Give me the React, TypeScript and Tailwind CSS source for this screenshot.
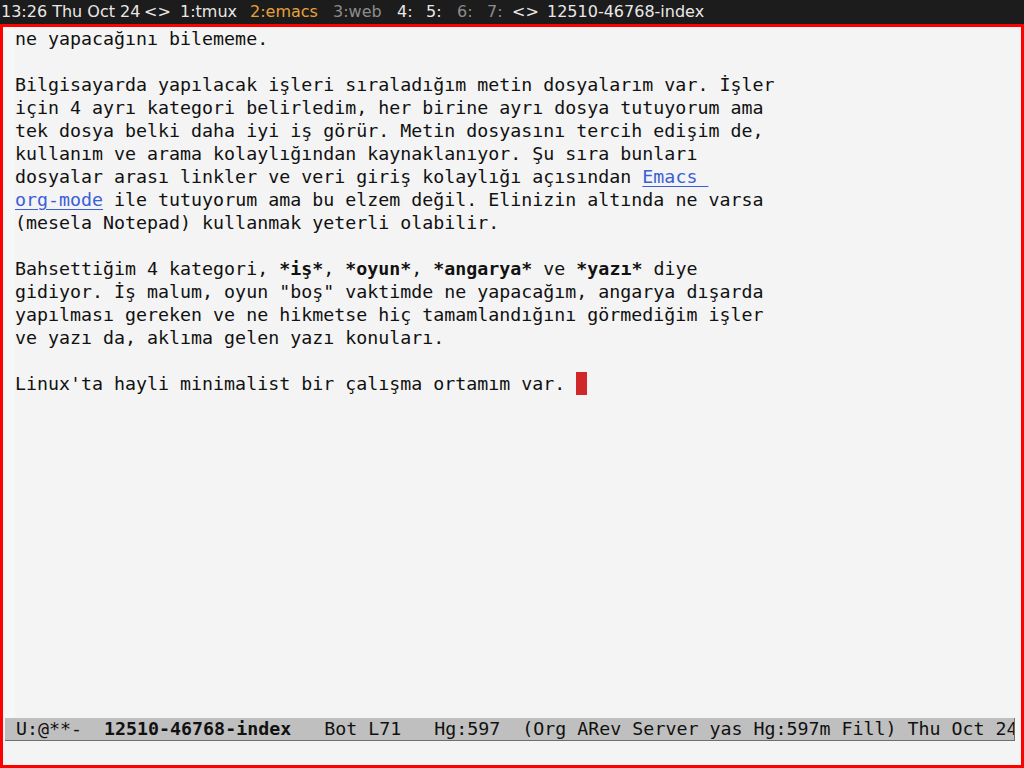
import React from "react";

const mono = { fontFamily: '"DejaVu Sans Mono", "Liberation Mono", monospace' };

function B({ children }: { children: React.ReactNode }) {
  return <span className="font-bold">{children}</span>;
}

function L({ children }: { children: React.ReactNode }) {
  return <span className="text-[#3a60d8] underline underline-offset-[3px]">{children}</span>;
}

export default function App() {
  const lines: React.ReactNode[] = [
    "ne yapacağını bilememe.",
    "",
    "Bilgisayarda yapılacak işleri sıraladığım metin dosyalarım var. İşler",
    "için 4 ayrı kategori belirledim, her birine ayrı dosya tutuyorum ama",
    "tek dosya belki daha iyi iş görür. Metin dosyasını tercih edişim de,",
    "kullanım ve arama kolaylığından kaynaklanıyor. Şu sıra bunları",
    <>dosyalar arası linkler ve veri giriş kolaylığı açısından <L>Emacs </L></>,
    <><L>org-mode</L> ile tutuyorum ama bu elzem değil. Elinizin altında ne varsa</>,
    "(mesela Notepad) kullanmak yeterli olabilir.",
    "",
    <>Bahsettiğim 4 kategori, <B>*iş*</B>, <B>*oyun*</B>, <B>*angarya*</B> ve <B>*yazı*</B> diye</>,
    'gidiyor. İş malum, oyun "boş" vaktimde ne yapacağım, angarya dışarda',
    "yapılması gereken ve ne hikmetse hiç tamamlandığını görmediğim işler",
    "ve yazı da, aklıma gelen yazı konuları.",
    "",
    <>Linux'ta hayli minimalist bir çalışma ortamım var. <span className="inline-block w-[11px] h-[23px] align-top bg-[#d02828]" /></>,
  ];

  return (
    <div className="w-[1024px] h-[768px] flex flex-col overflow-hidden bg-[#1c1c1c]">
      <div
        className="h-[24px] flex items-center whitespace-pre text-[16px] text-[#e8e8e8] pl-[1px] leading-none"
        style={{ fontFamily: '"DejaVu Sans", "Liberation Sans", sans-serif' }}
      >
        <span className="w-[143px]">13:26 Thu Oct 24</span>
        <span className="w-[36px]">&lt;&gt;</span>
        <span className="w-[70px]">1:tmux</span>
        <span className="w-[83px] text-[#e6a23a]">2:emacs</span>
        <span className="w-[64px] text-[#8c8c8c]">3:web</span>
        <span className="w-[29px]">4:</span>
        <span className="w-[31px]">5:</span>
        <span className="w-[30px] text-[#8c8c8c]">6:</span>
        <span className="w-[25px] text-[#8c8c8c]">7:</span>
        <span className="w-[35px]">&lt;&gt;</span>
        <span>12510-46768-index</span>
      </div>
      <div className="flex-1 flex flex-col border-[3px] border-[#ff0000] bg-[#f4f4f4] text-[#111111]" style={mono}>
        <div className="flex-1 flex min-h-0">
          <div className="w-[12px] bg-[#f7f7f7]" />
          <div className="flex-1 text-[18.3px] leading-[23px] whitespace-pre">
            {lines.map((l, i) => (
              <div key={i} className="h-[23px]">{l}</div>
            ))}
          </div>
        </div>
        <div className="h-[23px] ml-[2px] mr-[6px] bg-[#bfbfbf] border-b border-r border-[#6e6e6e] whitespace-pre text-[18.3px] leading-[22px] pl-[11px] overflow-hidden text-[#111111]">
          {"U:@**-  "}<span className="font-bold">12510-46768-index</span>{"   Bot L71   Hg:597  (Org ARev Server yas Hg:597m Fill) Thu Oct 24"}
        </div>
        <div className="h-[24px]" />
      </div>
    </div>
  );
}
